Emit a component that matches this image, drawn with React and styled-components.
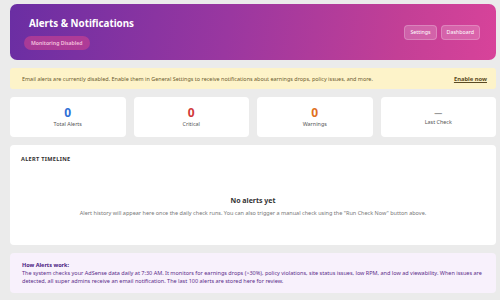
import React from 'react';
import styled, { createGlobalStyle } from 'styled-components';

const GlobalStyle = createGlobalStyle`
  html, body {
    margin: 0;
    padding: 0;
    background: #ebebeb;
    font-family: "Noto Sans", "Open Sans", sans-serif;
  }
`;

const Page = styled.div`
  display: flex;
  flex-direction: column;
  gap: 8px;
  padding: 4px 4px 0 10px;
  width: 500px;
  box-sizing: border-box;
`;

const Header = styled.div`
  height: 56px;
  border-radius: 7px;
  background: linear-gradient(100deg, #6a2ea3 0%, #9a37a0 45%, #c33f96 80%, #d8439a 100%);
  display: flex;
  align-items: center;
  justify-content: space-between;
  padding: 0 16px 0 14px;
  box-sizing: border-box;
`;

const TitleBlock = styled.div`
  display: flex;
  flex-direction: column;
  align-items: flex-start;
  gap: 6px;
  padding-top: 4px;
`;

const Title = styled.h1`
  margin: 0 0 0 5px;
  color: #fff;
  font-size: 9.8px;
  font-weight: 700;
  line-height: 12px;
`;

const Badge = styled.span`
  background: rgba(225, 70, 140, 0.5);
  color: #f4c2de;
  font-size: 5.2px;
  font-weight: 600;
  padding: 3px 7px;
  border-radius: 7px;
`;

const Actions = styled.div`
  display: flex;
  gap: 4px;
`;

const HeaderButton = styled.button`
  background: rgba(255, 255, 255, 0.18);
  border: 1px solid rgba(255, 255, 255, 0.22);
  color: #fff;
  font-family: inherit;
  font-size: 5.3px;
  padding: 3px 5px;
  border-radius: 4px;
  line-height: 7px;
`;

const Warning = styled.div`
  height: 21px;
  background: #fdf3c9;
  border-radius: 3px;
  display: flex;
  align-items: center;
  justify-content: space-between;
  padding: 0 9px 0 12px;
  font-size: 5.45px;
  color: #6b5a2e;
`;

const EnableLink = styled.a`
  color: #5a4a22;
  font-weight: 700;
  text-decoration: underline;
  font-size: 5.8px;
`;

const StatGrid = styled.div`
  display: grid;
  grid-template-columns: repeat(4, 1fr);
  gap: 8px;
`;

const StatCard = styled.div`
  height: 40px;
  background: #fff;
  border-radius: 4px;
  display: flex;
  flex-direction: column;
  align-items: center;
  justify-content: center;
  gap: 1px;
`;

const StatValue = styled.div`
  font-size: ${p => (p.$muted ? '8px' : '12px')};
  font-weight: 700;
  line-height: ${p => (p.$muted ? '8px' : '13px')};
  color: ${p => p.$color};
`;

const StatLabel = styled.div`
  font-size: 5.4px;
  color: #555;
`;

const Timeline = styled.div`
  height: 100px;
  background: #fff;
  border-radius: 4px;
  padding: 10px 11px;
  box-sizing: border-box;
  display: flex;
  flex-direction: column;
`;

const SectionTitle = styled.h3`
  margin: 0;
  font-size: 5.6px;
  font-weight: 700;
  letter-spacing: 0.3px;
  color: #333;
`;

const Empty = styled.div`
  flex: 1;
  display: flex;
  flex-direction: column;
  align-items: center;
  justify-content: center;
  gap: 4px;
  padding-top: 15px;
`;

const EmptyTitle = styled.div`
  font-size: 7px;
  font-weight: 700;
  color: #333;
`;

const EmptyText = styled.div`
  font-size: 5.5px;
  color: #777;
`;

const Info = styled.div`
  background: #f8f1fc;
  border-radius: 4px;
  padding: 8px 12px 8px;
  font-size: 5.5px;
  line-height: 8px;
  color: #5b2d8a;
`;

const InfoTitle = styled.div`
  font-weight: 700;
  color: #4a2080;
`;

const stats = [
  { value: '0', label: 'Total Alerts', color: '#2d6fd6' },
  { value: '0', label: 'Critical', color: '#d13a3a' },
  { value: '0', label: 'Warnings', color: '#e0701e' },
  { value: '—', label: 'Last Check', color: '#999', muted: true },
];

export default function App() {
  return (
    <>
      <GlobalStyle />
      <Page>
        <Header>
          <TitleBlock>
            <Title>Alerts &amp; Notifications</Title>
            <Badge>Monitoring Disabled</Badge>
          </TitleBlock>
          <Actions>
            <HeaderButton>Settings</HeaderButton>
            <HeaderButton>Dashboard</HeaderButton>
          </Actions>
        </Header>
        <Warning>
          <span>Email alerts are currently disabled. Enable them in General Settings to receive notifications about earnings drops, policy issues, and more.</span>
          <EnableLink>Enable now</EnableLink>
        </Warning>
        <StatGrid>
          {stats.map(s => (
            <StatCard key={s.label}>
              <StatValue $color={s.color} $muted={s.muted}>{s.value}</StatValue>
              <StatLabel>{s.label}</StatLabel>
            </StatCard>
          ))}
        </StatGrid>
        <Timeline>
          <SectionTitle>ALERT TIMELINE</SectionTitle>
          <Empty>
            <EmptyTitle>No alerts yet</EmptyTitle>
            <EmptyText>Alert history will appear here once the daily check runs. You can also trigger a manual check using the "Run Check Now" button above.</EmptyText>
          </Empty>
        </Timeline>
        <Info>
          <InfoTitle>How Alerts work:</InfoTitle>
          The system checks your AdSense data daily at 7:30 AM. It monitors for earnings drops (&gt;30%), policy violations, site status issues, low RPM, and low ad viewability. When issues are detected, all super admins receive an email notification. The last 100 alerts are stored here for review.
        </Info>
      </Page>
    </>
  );
}
